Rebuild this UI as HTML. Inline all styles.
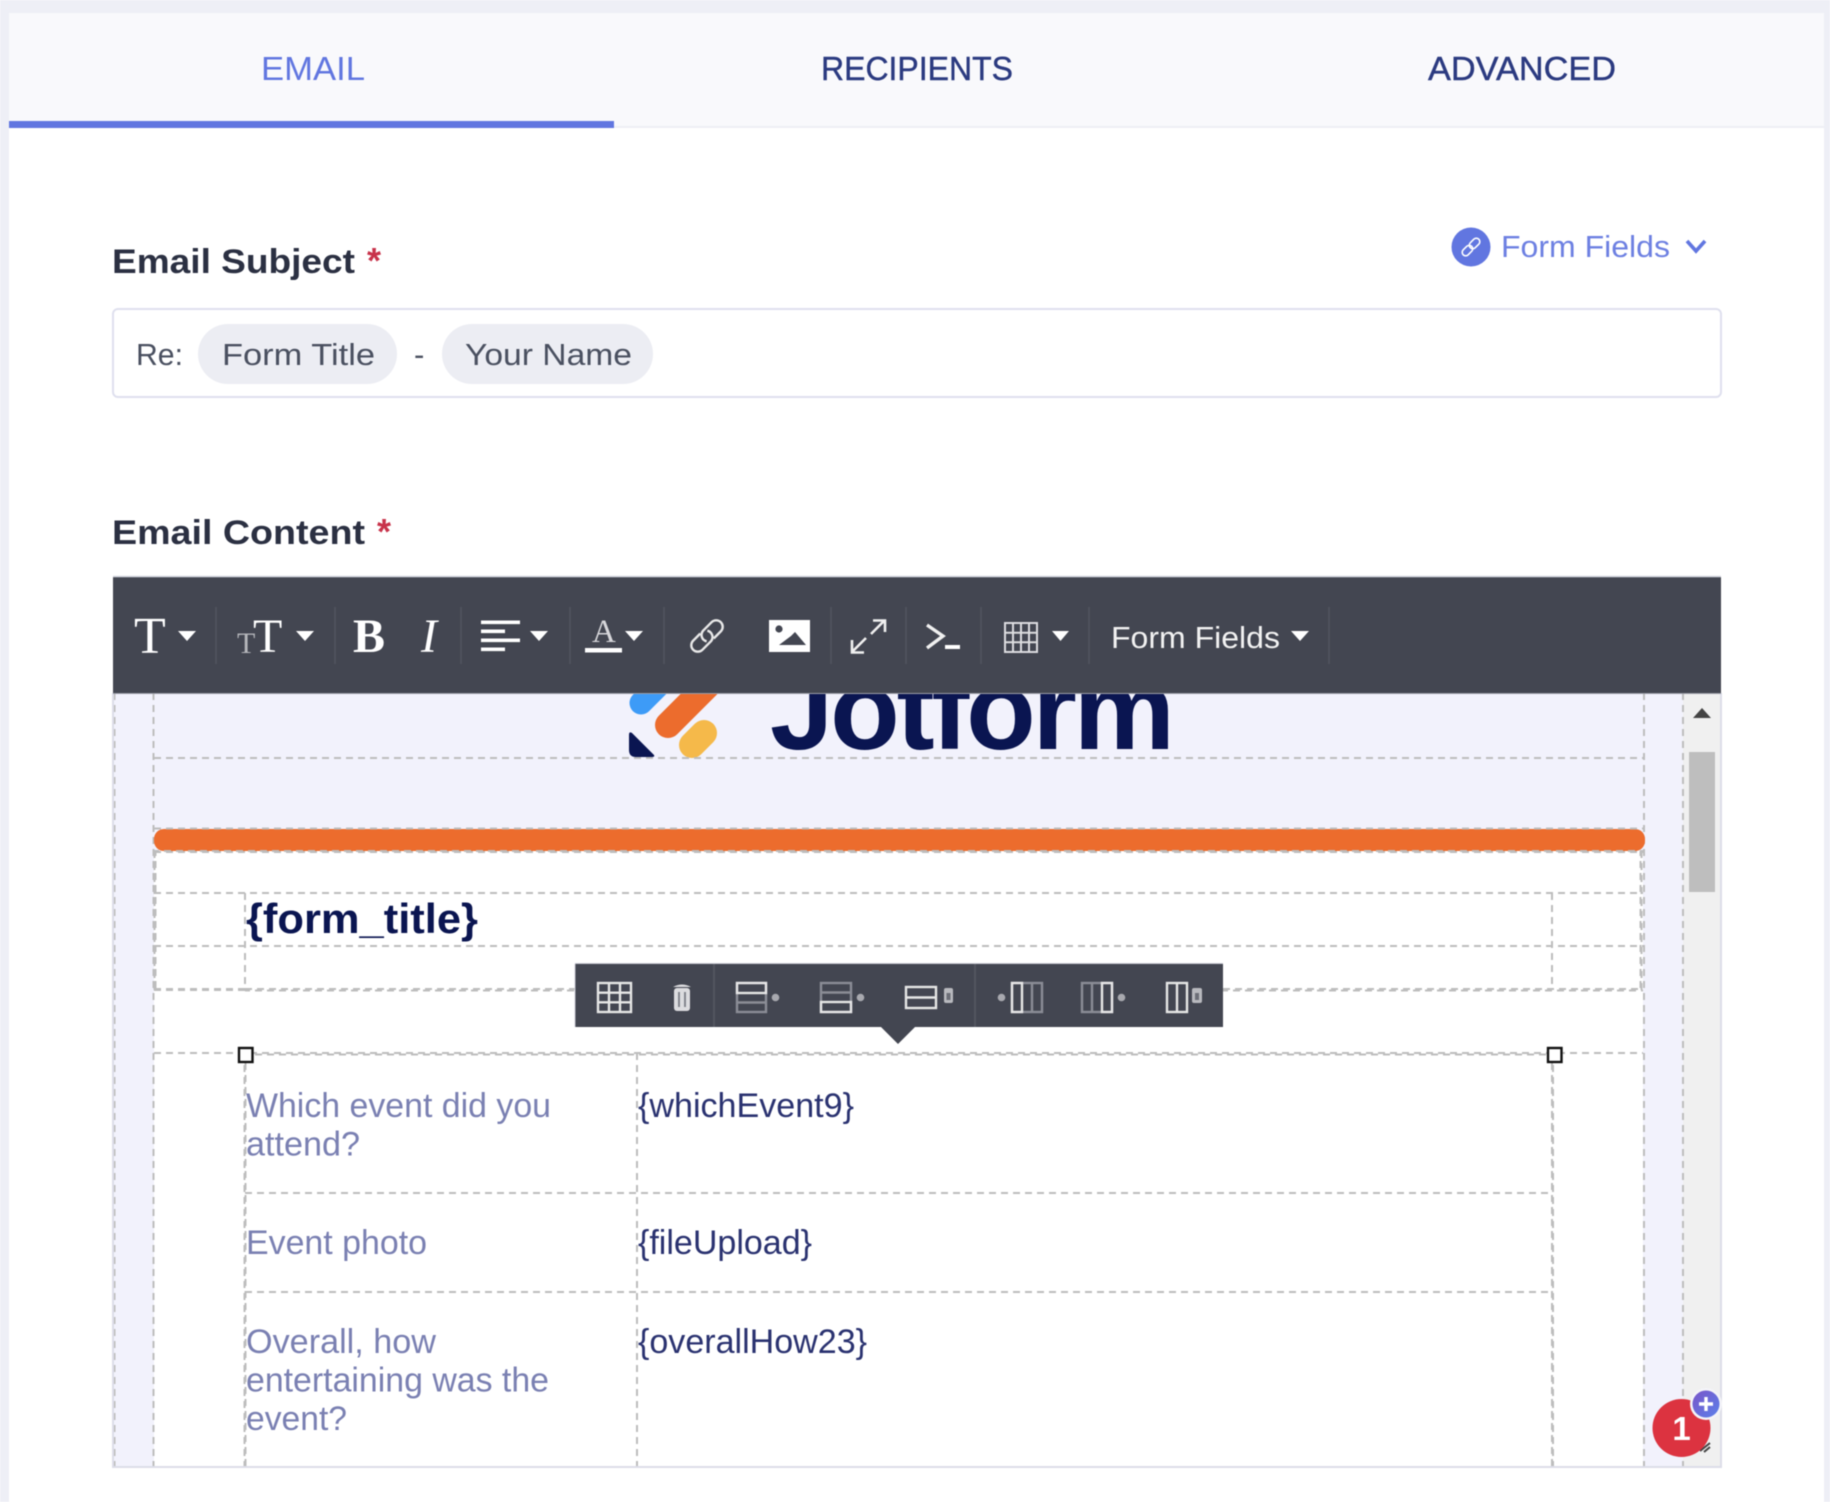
<!DOCTYPE html>
<html lang="en">
<head>
<meta charset="utf-8">
<title>Email editor</title>
<style>
html,body{margin:0;padding:0;width:1830px;height:1502px;overflow:hidden;background:#fff}
svg{display:block;position:absolute;left:0;top:0;filter:blur(.55px)}
text{font-family:"Liberation Sans",sans-serif}
.s{font-family:"Liberation Serif",serif;fill:#fff}
.d{fill:none;stroke:#bdbdbd;stroke-width:2;stroke-dasharray:7 5}
.d2{fill:none;stroke:#bdbdbd;stroke-width:2;stroke-dasharray:7 5;stroke-dashoffset:2}
.w{fill:none;stroke:#e6e6e6;stroke-width:2.4}
.g{fill:none;stroke:#8b8d96;stroke-width:2.4}
.sep{stroke:#52555f;stroke-width:1.5}
.c{fill:#fff}
.lab{fill:#7a80b2;font-size:34px}
.val{fill:#2a3270;font-size:34px}
.tab{font-size:33px;stroke-width:.4px}
</style>
</head>
<body>
<svg width="1830" height="1502" viewBox="0 0 1830 1502" xmlns="http://www.w3.org/2000/svg">
  <!-- page frame -->
  <rect width="1830" height="1502" fill="#eeeff6"/>
  <rect x="9" y="13" width="1815" height="1489" fill="#fff"/>
  <rect x="9" y="13" width="1815" height="113" fill="#f9f9fc"/>
  <rect x="9" y="126" width="1815" height="2" fill="#eeeff5"/>
  <rect x="9" y="121" width="605" height="7" fill="#6176e0"/>

  <text class="tab" x="261" y="80" textLength="104" lengthAdjust="spacingAndGlyphs" fill="#6176e0">EMAIL</text>
  <text class="tab" x="821" y="80" textLength="192" lengthAdjust="spacingAndGlyphs" fill="#2b3a80" stroke="#2b3a80">RECIPIENTS</text>
  <text class="tab" x="1428" y="80" textLength="188" lengthAdjust="spacingAndGlyphs" fill="#2b3a80" stroke="#2b3a80">ADVANCED</text>

  <!-- subject -->
  <text x="112" y="273" font-size="34" font-weight="700" fill="#2b3042" textLength="243" lengthAdjust="spacingAndGlyphs">Email Subject</text>
  <text x="367" y="273" font-size="36" font-weight="700" fill="#c8324a">*</text>

  <circle cx="1471" cy="247" r="19.5" fill="#6176e0"/>
  <g fill="none" stroke="#fff" stroke-width="1.6" transform="rotate(-45 1471 247)">
    <rect x="1460" y="243.5" width="12" height="7" rx="3.5"/>
    <rect x="1470" y="243.5" width="12" height="7" rx="3.5"/>
  </g>
  <text x="1501" y="257" font-size="31" fill="#6d80e2" textLength="169" lengthAdjust="spacingAndGlyphs">Form Fields</text>
  <polyline points="1687,241 1696,251 1705,241" fill="none" stroke="#6176e0" stroke-width="3.6"/>

  <rect x="113" y="309" width="1608" height="88" rx="5" fill="#fff" stroke="#dfe0ee" stroke-width="2"/>
  <text x="136" y="365" font-size="31" fill="#4a5060" textLength="47" lengthAdjust="spacingAndGlyphs">Re:</text>
  <rect x="198" y="324" width="199" height="60" rx="30" fill="#ecedf3"/>
  <text x="222" y="365" font-size="31" fill="#4a5060" textLength="153" lengthAdjust="spacingAndGlyphs">Form Title</text>
  <text x="414" y="365" font-size="31" fill="#4a5060">-</text>
  <rect x="442" y="324" width="211" height="60" rx="30" fill="#ecedf3"/>
  <text x="465" y="365" font-size="31" fill="#4a5060" textLength="167" lengthAdjust="spacingAndGlyphs">Your Name</text>

  <text x="112" y="544" font-size="34" font-weight="700" fill="#2b3042" textLength="253" lengthAdjust="spacingAndGlyphs">Email Content</text>
  <text x="377" y="544" font-size="36" font-weight="700" fill="#c8324a">*</text>

  <!-- editor body -->
  <rect x="113" y="693" width="1608" height="774" fill="#f2f2fc"/>
  <rect x="154" y="851" width="1489" height="616" fill="#fff"/>
  <rect x="1683" y="693" width="38" height="774" fill="#f0f0f0"/>

  <!-- logo -->
  <g fill="none" stroke-linecap="round">
    <line x1="641" y1="703" x2="675" y2="669" stroke="#3d9bf7" stroke-width="23"/>
    <line x1="668" y1="725" x2="721" y2="672" stroke="#ec6c2d" stroke-width="26"/>
    <line x1="692" y1="745" x2="704" y2="733" stroke="#f5b94a" stroke-width="26"/>
  </g>
  <path d="M629 735q0-4 3-2l22 22q1 2-2 2h-16q-7 0-7-7z" fill="#0a1551"/>
  <text x="770" y="749" font-size="114" font-weight="700" fill="#0a1551" textLength="405" lengthAdjust="spacing">Jotform</text>

  <!-- dashed grid -->
  <path class="d" d="M114.5 693V1467M153.5 693V1467M1644 693V1467M1683 693V1467"/>
  <path class="d" d="M154 758H1643M154 893H1643M154 946H1643M154 1053H1643"/>
  <path class="d" stroke-width="3" style="stroke-width:3" d="M154 989.5H245"/>
  <path class="d" d="M245 989H575M1223 989H1643"/>
  <path class="d2" d="M245 990.5H575M1223 990.5H1643M245 1054.5H1552"/>
  <path class="d" d="M245 893V989M1552 893V989"/>
  <path class="d2" d="M155.5 851V990M1640.5 851V990"/>
  <path class="d" d="M154.5 851V990M1641.5 851V990"/>
  <path class="d" d="M244.5 1053V1467M1553 1053V1467M637 1053V1467"/>
  <path class="d2" d="M245.5 1053V1467M1552 1053V1467"/>
  <path class="d" d="M245 1193H1552M245 1292H1552"/>

  <!-- orange bar -->
  <rect x="154" y="829" width="1491" height="22" rx="10" fill="#ec6c2d"/>
  <path class="d" d="M154 828.5H1643M154 852H1643"/>
  <path class="d2" d="M154 851H1643"/>

  <text x="246" y="933" font-size="42" font-weight="700" fill="#0a1551" textLength="232" lengthAdjust="spacingAndGlyphs">{form_title}</text>

  <!-- table content -->
  <text class="lab" x="246" y="1117" textLength="305" lengthAdjust="spacingAndGlyphs">Which event did you</text>
  <text class="lab" x="246" y="1155.5" textLength="114" lengthAdjust="spacingAndGlyphs">attend?</text>
  <text class="val" x="638" y="1117" textLength="216" lengthAdjust="spacingAndGlyphs">{whichEvent9}</text>
  <text class="lab" x="246" y="1254" textLength="181" lengthAdjust="spacingAndGlyphs">Event photo</text>
  <text class="val" x="638" y="1254" textLength="174" lengthAdjust="spacingAndGlyphs">{fileUpload}</text>
  <text class="lab" x="246" y="1353" textLength="190" lengthAdjust="spacingAndGlyphs">Overall, how</text>
  <text class="lab" x="246" y="1391.5" textLength="303" lengthAdjust="spacingAndGlyphs">entertaining was the</text>
  <text class="lab" x="246" y="1430" textLength="101" lengthAdjust="spacingAndGlyphs">event?</text>
  <text class="val" x="638" y="1353" textLength="229" lengthAdjust="spacingAndGlyphs">{overallHow23}</text>

  <!-- handles -->
  <rect x="239" y="1048" width="13.5" height="14" fill="#fff" stroke="#111" stroke-width="2.4"/>
  <rect x="1548" y="1048" width="13.5" height="14" fill="#fff" stroke="#111" stroke-width="2.4"/>

  <!-- scrollbar -->
  <polygon points="1693,718 1711,718 1702,708" fill="#444"/>
  <rect x="1689" y="752" width="26" height="140" fill="#bebebe"/>

  <!-- editor border -->
  <path d="M113 693V1467H1721V693" fill="none" stroke="#dcdde8" stroke-width="2"/>

  <!-- main toolbar -->
  <rect x="113" y="577" width="1608" height="116" fill="#434651"/>
  <path d="M113 576.5H1721" stroke="#d6d7e0" stroke-width="1.5"/>
  <path d="M113 693.5H1721" stroke="#9a9ca6" stroke-width="1"/>
  <path class="sep" d="M216 607V664M335 607V664M461 607V664M570 607V664M664 607V664M831 607V664M906 607V664M981 607V664M1089 607V664M1329 607V664"/>

  <text class="s" x="134" y="653" font-size="52">T</text>
  <polygon class="c" points="178,631 196,631 187,641"/>
  <text class="s" x="237" y="653" font-size="30" style="fill:#b5b6bb">T</text>
  <text class="s" x="253" y="652" font-size="48">T</text>
  <polygon class="c" points="296,631 314,631 305,641"/>
  <text class="s" x="353" y="652" font-size="48" font-weight="700">B</text>
  <text class="s" x="421" y="652" font-size="48" font-style="italic">I</text>

  <rect class="c" x="481" y="620.5" width="39" height="3.6"/>
  <rect class="c" x="481" y="629.5" width="24" height="3.6"/>
  <rect class="c" x="481" y="638.5" width="39" height="3.6"/>
  <rect class="c" x="481" y="647.5" width="24" height="3.6"/>
  <polygon class="c" points="530,631 548,631 539,641"/>

  <text class="s" x="592" y="642" font-size="33" style="fill:#d6d6da">A</text>
  <rect class="c" x="585" y="648" width="37" height="4.5"/>
  <polygon class="c" points="625,631 643,631 634,641"/>

  <g fill="none" stroke="#e8e8e8" stroke-width="2.4" transform="rotate(-45 707 636)">
    <path d="M704 629.5H694a6.5 6.5 0 0 0 0 13H706a6.5 6.5 0 0 0 5-10"/>
    <path d="M710 642.5H720a6.5 6.5 0 0 0 0-13H708a6.5 6.5 0 0 0-5 10"/>
  </g>

  <rect class="c" x="769" y="620" width="41" height="32"/>
  <circle cx="779" cy="629" r="3.6" fill="#434651"/>
  <polygon points="779,645 791,636 795,632 806,645" fill="#434651"/>

  <g fill="none" stroke="#f0f0f0" stroke-width="2.6">
    <path d="M871 634L884 621M873 620.5H885V632"/>
    <path d="M866 638L853 651M852 640V652.5H864"/>
  </g>

  <polyline points="927,625 943,636 927,648" fill="none" stroke="#f0f0f0" stroke-width="3.4"/>
  <rect class="c" x="945" y="645" width="15" height="4"/>

  <g fill="none" stroke="#dcdcdf" stroke-width="2">
    <rect x="1005" y="623" width="32" height="29"/>
    <path d="M1013 623V652M1021 623V652M1029 623V652M1005 632.7H1037M1005 642.3H1037"/>
  </g>
  <polygon class="c" points="1052,631 1069,631 1060.5,641"/>

  <text x="1111" y="648" font-size="31" fill="#f2f2f2" textLength="169" lengthAdjust="spacingAndGlyphs">Form Fields</text>
  <polygon class="c" points="1291,631 1309,631 1300,641"/>

  <!-- floating table toolbar -->
  <polygon points="881,1027 915,1027 898,1044" fill="#434651"/>
  <rect x="575" y="964" width="648" height="63" fill="#434651"/>
  <path d="M575 963.5H1223M575 964V1027" stroke="#c7c8d2" stroke-width="1" fill="none"/>
  <path d="M714 964V1027M975 964V1027" stroke="#52555f" stroke-width="2"/>

  <g class="w">
    <rect class="w" x="598" y="983" width="33" height="29"/>
    <path class="w" d="M609 983V1012M620 983V1012M598 992.7H631M598 1002.3H631"/>
  </g>

  <rect x="674" y="988" width="16" height="23" rx="3" fill="#dcdcdf"/>
  <path d="M673 987q9-5 18 0z" fill="#dcdcdf"/>
  <path d="M679 992V1007M685 992V1007" stroke="#7b7d86" stroke-width="1.8"/>

  <rect class="g" x="737" y="983" width="29" height="29"/>
  <path class="g" d="M737 1002.5H766"/>
  <rect class="w" x="737" y="983" width="29" height="10"/>
  <circle cx="775.5" cy="997.5" r="3.8" fill="#a8a9af"/>

  <rect class="g" x="821" y="983" width="30" height="29"/>
  <path class="g" d="M821 992.5H851"/>
  <rect class="w" x="821" y="1002" width="30" height="10"/>
  <circle cx="860.5" cy="997.5" r="3.8" fill="#a8a9af"/>

  <rect class="w" x="906" y="987" width="30" height="21"/>
  <path class="w" d="M906 997.5H936"/>
  <rect x="944" y="988" width="9" height="15" rx="2" fill="#b8b9be"/>
  <rect x="946.5" y="993" width="4" height="7" fill="#6c6e77"/>

  <circle cx="1001.5" cy="997.5" r="3.8" fill="#a8a9af"/>
  <rect class="g" x="1012" y="983" width="30" height="29"/>
  <path class="g" d="M1032 983V1012"/>
  <rect class="w" x="1012" y="983" width="10" height="29"/>

  <rect class="g" x="1082" y="983" width="30" height="29"/>
  <path class="g" d="M1092 983V1012"/>
  <rect class="w" x="1102" y="983" width="10" height="29"/>
  <circle cx="1121.5" cy="997.5" r="3.8" fill="#a8a9af"/>

  <rect class="w" x="1167" y="983" width="20" height="29"/>
  <path class="w" d="M1177 983V1012"/>
  <rect x="1192" y="988" width="10" height="15" rx="2" fill="#b8b9be"/>
  <rect x="1195" y="993" width="4" height="7" fill="#6c6e77"/>

  <!-- resize grip and badge -->
  <path d="M1700 1451L1710 1443M1704 1452L1710 1447" stroke="#444" stroke-width="2"/>
  <circle cx="1681.5" cy="1428" r="29" fill="#dc3340"/>
  <text x="1681.5" y="1440" font-size="33" font-weight="700" fill="#fff" text-anchor="middle">1</text>
  <defs>
    <linearGradient id="bp" x1="0" y1="0" x2="1" y2="1">
      <stop offset="0" stop-color="#7a55c8"/>
      <stop offset="1" stop-color="#5b80ea"/>
    </linearGradient>
  </defs>
  <circle cx="1706" cy="1404" r="16" fill="#f4f4f8"/>
  <circle cx="1706" cy="1404" r="13.5" fill="url(#bp)"/>
  <path d="M1706 1397V1411M1699 1404H1713" stroke="#fff" stroke-width="3.4"/>
</svg>
</body>
</html>
